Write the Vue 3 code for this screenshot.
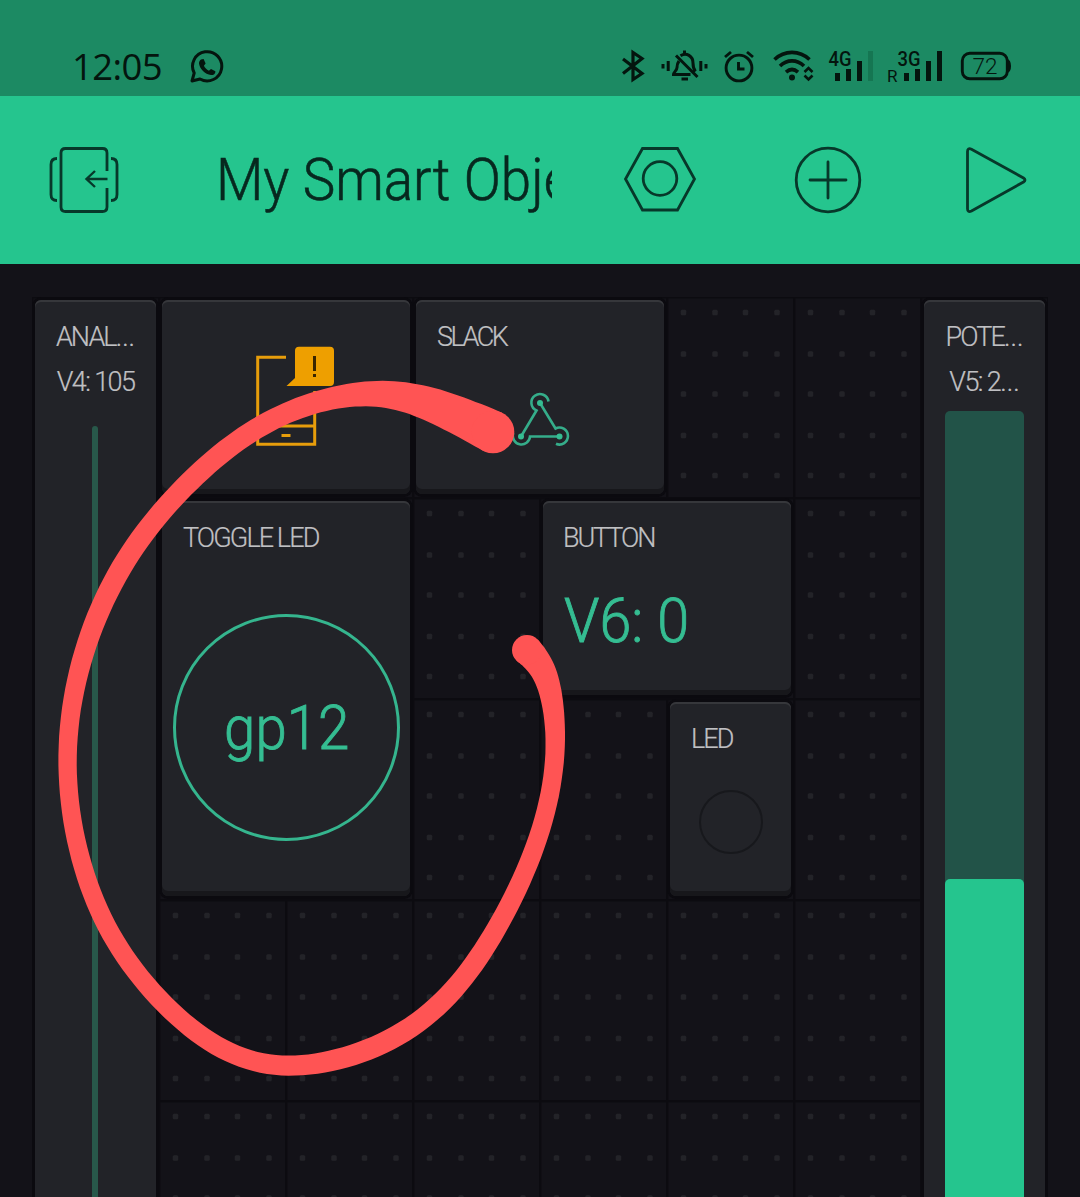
<script setup>
// Hand-drawn marker loop: centre x, centre y and half width along the stroke.
const loop = [
  [493, 432, 21.3], [450, 411.5, 18.5], [408, 397, 15], [366, 393, 12.3], [318, 401, 10.7], [268, 421, 10.4],
  [220, 453.5, 10.4], [172, 499, 10.3], [130, 552, 10.4], [96, 616, 10.3], [73.500, 690, 9.6], [66.300, 765, 9.1],
  [75, 840, 9.2], [98, 911, 9.4], [134, 971, 9.5], [184, 1024, 9.7], [236, 1057, 9.8], [288, 1067, 10],
  [345, 1058.5, 10.5], [405, 1033, 10.5], [455, 990, 10.2], [492, 937, 10], [525.500, 873, 9.5],
  [549.500, 802, 9.3], [556.300, 738, 9.6], [550.500, 690, 11.2], [540.500, 665, 13.2], [527, 650, 15]
]

const spline = (a, b, c, d, t) =>
  0.5 * (2 * b + (c - a) * t + (2 * a - 5 * b + 4 * c - d) * t * t + (3 * b - a - 3 * c + d) * t * t * t)
const at = (i) => loop[Math.max(0, Math.min(loop.length - 1, i))]
const samples = []
for (let i = 0; i < loop.length - 1; i++) {
  for (let s = 0; s < 8; s++) {
    samples.push([0, 1, 2].map((k) => spline(at(i - 1)[k], at(i)[k], at(i + 1)[k], at(i + 2)[k], s / 8)))
  }
}
samples.push(at(loop.length - 1))

// Average neighbouring samples so that the stroke bends evenly.
const smooth = samples.map((p, i) => {
  const r = Math.min(5, i, samples.length - 1 - i)
  const near = samples.slice(i - r, i + r + 1)
  return [0, 1, 2].map((k) => near.reduce((sum, q) => sum + q[k], 0) / near.length)
})

const edge = (side) =>
  smooth.map(([x, y, w], i) => {
    const p = smooth[Math.max(0, i - 1)]
    const n = smooth[Math.min(smooth.length - 1, i + 1)]
    const len = Math.hypot(n[0] - p[0], n[1] - p[1])
    return `${(x - (side * w * (n[1] - p[1])) / len).toFixed(1)} ${(y + (side * w * (n[0] - p[0])) / len).toFixed(1)}`
  })
const loopPath = `M${edge(1).join('L')}L${edge(-1).reverse().join('L')}Z`
const ends = [loop[0], loop[loop.length - 1]]

const dots = []
for (const y of [15.5, 57, 97, 138.5, 178.5]) {
  for (const x of [17.5, 49, 79.5, 111]) dots.push([x, y])
}
</script>

<template>
  <div class="screen">
    <div class="status">
      <span class="time">12:05</span>
      <svg class="whatsapp" width="36" height="36" viewBox="189 48 36 36" fill="none" stroke="#04150e">
        <path d="M192 81l2.200-8A14.600 14.600 0 1 1 200 79z" stroke-width="3" stroke-linejoin="round" />
        <path d="M201 59.500l2.600-.6 2 4.600-1.700 2.300c1 2.200 2.600 3.800 5 4.900l2.100-1.800 4.400 2.300c.2 2.600-2 4-4.400 3.900-6-.8-11.300-6-12-11.500 0-1.700.7-3.200 2-4.100z" fill="#04150e" stroke="none" />
      </svg>
      <div class="tray">
        <svg width="24" height="36" viewBox="621 48 24 36" fill="none" stroke="#04150e" stroke-width="3.200">
          <path d="M623 59l19 14.500-9 6V52.500l9 6L623 73.500" stroke-linejoin="miter" />
        </svg>
        <svg class="mute" width="46" height="36" viewBox="661 48 46 36" fill="none" stroke="#04150e" stroke-width="3">
          <path d="M663 64v4.500M668.200 61v10M700.800 61v10M706 64v4.500" />
          <path d="M676 55.500l21.500 21.500M679 61c-1.500 2-2 4-2 6.500 0 3-3.500 4.500-3.500 7h17M680.500 55.800c6-4 12.500.5 12.500 7.200 0 4 .3 6 2.500 8.500" />
          <path d="M684.500 50.500v3M681.500 79h6.500" />
        </svg>
        <svg class="alarm" width="30" height="36" viewBox="724 48 30 36" fill="none" stroke="#04150e" stroke-width="2.900">
          <circle cx="739" cy="68" r="12.900" />
          <path d="M738.500 62v7h6M725 57l6-5M753 57l-6-5" />
        </svg>
        <svg class="wifi" width="42" height="36" viewBox="773 48 42 36" fill="none" stroke="#04150e" stroke-width="3.600">
          <path d="M774.500 59.500c10-9.500 25-9.500 35 0M780 66c7-6.800 17-6.800 24 0M786 72.200c4-3.600 8-3.600 12 0" />
          <circle cx="792" cy="77.500" r="3" fill="#04150e" stroke="none" />
          <path d="M804.500 72l4-4 4 4M804.500 75.500l4 4 4-4" stroke-width="2.600" />
        </svg>
        <svg class="sim1" width="45" height="36" viewBox="829 48 45 36" fill="#04150e">
          <text x="828.500" y="65.700" font-size="20" font-weight="500" textLength="23" lengthAdjust="spacingAndGlyphs">4G</text>
          <path d="M835 73h5v8h-5zM846 69h5v12h-5zM857 61h5v20h-5z" />
          <path d="M868 51h5v30h-5z" fill="#157652" />
        </svg>
        <svg class="sim2" width="56" height="36" viewBox="887 48 56 36" fill="#04150e">
          <text x="887" y="81.500" font-size="17" font-weight="400" textLength="10.500" lengthAdjust="spacingAndGlyphs">R</text>
          <text x="897.500" y="65.700" font-size="20" font-weight="500" textLength="23" lengthAdjust="spacingAndGlyphs">3G</text>
          <path d="M904 73h5v8h-5zM915 69h5v12h-5zM926 61h5v20h-5zM937 51h5v30h-5z" />
        </svg>
        <svg class="battery" width="52" height="36" viewBox="960 48 52 36">
          <rect x="962.300" y="53.300" width="45" height="25.500" rx="7.500" fill="none" stroke="#04150e" stroke-width="2.900" />
          <path d="M1007 59q4 1 4 7t-4 7z" fill="#04150e" />
          <text x="972.500" y="73.700" font-size="22" font-weight="300" fill="#04150e" textLength="25" lengthAdjust="spacingAndGlyphs">72</text>
        </svg>
      </div>
    </div>

    <header class="bar">
      <svg width="72" height="68" viewBox="48 146 72 68" fill="none" stroke="#07382a" stroke-width="2.800">
        <path d="M107 171v-18q0-4.500-4.500-4.500h-37q-4.500 0-4.500 4.500v54q0 4.500 4.500 4.500h37q4.500 0 4.500-4.500v-19" />
        <path d="M57 158.500q-6 0-6 6v30q0 6 6 6M111 158.500q6 0 6 6v30q0 6-6 6" />
        <path d="M107.500 179H87M95 171l-8.500 8 8.500 8" stroke-width="2.400" />
      </svg>
      <h1 class="title"><span>My Smart Object</span></h1>
      <svg class="nut" width="74" height="68" viewBox="623 146 74 68" fill="none" stroke="#07382a" stroke-width="2.800">
        <path d="M642.500 148.500h35l17 30.500-17 31h-35l-17-31z" />
        <circle cx="660" cy="178.500" r="16.800" />
      </svg>
      <svg class="plus" width="68" height="68" viewBox="794 146 68 68" fill="none" stroke="#07382a" stroke-width="2.800" stroke-linecap="round">
        <circle cx="828" cy="180" r="31.800" />
        <path d="M810 180h36M828 162v36" />
      </svg>
      <svg class="play" width="64" height="68" viewBox="964 146 64 68" fill="none" stroke="#07382a" stroke-width="2.800">
        <path d="M967.500 151.500q0-4 4-2.300l52 28.800q3 2 0 4l-52 29q-4 1.800-4-2.200z" />
      </svg>
    </header>

    <main class="board">
      <svg class="dots" width="1016" height="1005">
        <defs>
          <pattern id="cell" x="-1" y="-1" width="127" height="201" patternUnits="userSpaceOnUse">
            <path d="M0 1.300h127M1.300 0v201" stroke="#0c0b10" stroke-width="2.600" />
            <rect v-for="([x, y], i) in dots" :key="i" :x="x - 2.700" :y="y - 1.800" width="5.400" height="5.600" rx="1.500" fill="#232328" />
          </pattern>
        </defs>
        <rect width="1016" height="1005" fill="url(#cell)" />
      </svg>

      <section class="card analog">
        <span class="name anal">ANAL<i>...</i></span>
        <span class="value">V4: 105</span>
        <div class="rail"></div>
      </section>

      <section class="card notify">
        <svg width="80" height="102" viewBox="255 346 80 102" fill="none" stroke="#e79d0b" stroke-width="3">
          <path d="M286 357.300h-28.300v87h57V391M258 426h57" />
          <path d="M281.500 435.500h9" />
          <path d="M299 346.800h31q4 0 4 4V382q0 4-4 4h-43.500l8.500-8V350.800q0-4 4-4z" fill="#ee9f00" stroke="none" />
          <path d="M314.500 356v15M314.500 374v3" stroke="#3a2500" />
        </svg>
      </section>

      <section class="card slack">
        <span class="name sl">SLACK</span>
        <svg class="hook" width="60" height="56" viewBox="511 391 60 56" fill="none" stroke="#35ad8a" stroke-width="2.600">
          <path d="M548.500 401.500a8.600 8.600 0 1 0-12 9L521 436.500" />
          <path d="M540 403l15.500 25.500a8.500 8.500 0 1 1 .5 15.300" />
          <path d="M513.300 433a8.600 8.600 0 1 0 16.700 3.500h29.500" />
          <g fill="#35bd92" stroke="none">
            <circle cx="540" cy="403" r="3" /><circle cx="521" cy="436.500" r="3" /><circle cx="559.500" cy="436.500" r="3" />
          </g>
        </svg>
      </section>

      <section class="card toggle">
        <span class="name tg">TOGGLE LED</span>
        <div class="ring"><span>gp12</span></div>
      </section>

      <section class="card button">
        <span class="name bt">BUTTON</span>
        <span class="big">V6: 0</span>
      </section>

      <section class="card led">
        <span class="name ld">LED</span>
        <div class="lamp"></div>
      </section>

      <section class="card pot">
        <span class="name pt">POTE<i>...</i></span>
        <span class="value v5">V5: 2<i>...</i></span>
        <div class="gauge"><div class="fill"></div></div>
      </section>
    </main>

    <svg class="marker" width="1080" height="1197" fill="#ff5454">
      <path :d="loopPath" />
      <circle v-for="([x, y, r], i) in ends" :key="i" :cx="x" :cy="y" :r="r" />
    </svg>
  </div>
</template>

<style>
body {
  background: #131218;
}
</style>

<style scoped>
.screen {
  position: relative;
  width: 1080px;
  height: 1197px;
  overflow: hidden;
  background: #131218;
  font-family: Roboto, "Open Sans", sans-serif;
  font-weight: 300;
}
svg {
  display: block;
  flex: none;
}
.status {
  display: flex;
  height: 96px;
  box-sizing: border-box;
  padding: 48px 68px 12px 72px;
  background: #1c8a63;
}
.time {
  width: 117px;
  font: 400 36.5px/36px "Open Sans", sans-serif;
  letter-spacing: -0.6px;
  color: #04150e;
  white-space: nowrap;
}
.tray {
  display: flex;
  margin-left: auto;
}
.tray svg {
  overflow: visible;
}
.mute {
  margin-left: 16px;
}
.alarm {
  margin-left: 17px;
}
.wifi {
  margin-left: 19px;
}
.sim1 {
  margin-left: 14px;
}
.sim2 {
  margin-left: 13px;
}
.battery {
  margin-left: 17px;
}
.bar {
  display: flex;
  align-items: flex-start;
  height: 168px;
  box-sizing: border-box;
  padding: 50px 0 0 48px;
  background: #25c58e;
}
.title {
  width: 336px;
  margin: 0 0 0 96px;
  overflow: hidden;
  white-space: nowrap;
  font-size: 59.5px;
  line-height: 68px;
  font-weight: 300;
  color: #07281f;
}
.title span {
  display: inline-block;
  transform: scaleX(0.92);
  transform-origin: 0 50%;
  -webkit-text-stroke: 0.6px;
}
.nut {
  margin-left: 71px;
}
.plus {
  margin-left: 97px;
}
.play {
  margin-left: 102px;
}
.board {
  display: grid;
  grid-template-columns: repeat(8, 127px);
  grid-template-rows: repeat(5, 201px);
  padding: 33px 32px 0;
}
.dots {
  grid-area: 1 / 1 / -1 / -1;
}
.card {
  display: flex;
  flex-direction: column;
  align-items: flex-start;
  box-sizing: border-box;
  margin: 3px 3px 4px;
  padding: 20px 21px 0;
  border-radius: 6px;
  background: #222328;
  box-shadow: 0 0 0 3px #0b0a0f, inset 0 2px #36373b, inset 0 -5px #17171b;
}
.analog {
  grid-area: 1 / 1 / 6 / 2;
  align-items: center;
  padding: 20px 0 0;
}
.notify {
  grid-area: 1 / 2 / 2 / 4;
  align-items: center;
  padding-top: 46px;
  padding-left: 38px;
  padding-right: 20px;
}
.slack {
  grid-area: 1 / 4 / 2 / 6;
}
.toggle {
  grid-area: 2 / 2 / 4 / 4;
}
.button {
  grid-area: 2 / 5 / 3 / 7;
}
.led {
  grid-area: 3 / 6 / 4 / 7;
}
.pot {
  grid-area: 1 / 8 / 6 / 9;
  align-items: center;
  padding: 20px 0 0;
}
.name,
.value {
  font-size: 27px;
  line-height: 34px;
  letter-spacing: -1.9px;
  white-space: nowrap;
  color: #c0c0c3;
  -webkit-text-stroke: 0.2px;
}
.sl {
  letter-spacing: -2.5px;
}
.bt {
  letter-spacing: -2.1px;
  margin-left: -1px;
}
.value {
  margin-top: 11px;
  letter-spacing: -1.6px;
}
i {
  font-style: normal;
  letter-spacing: 0;
}
.rail {
  width: 6px;
  flex: 1;
  margin: 27px 2px 0 0;
  border-radius: 3px 3px 0 0;
  background: #28584a;
}
.hook {
  margin: 37px 0 0 74px;
}
.ring {
  display: flex;
  align-items: center;
  justify-content: center;
  box-sizing: border-box;
  width: 227px;
  height: 227px;
  margin: 59px 0 0 -10px;
  border: 3px solid #35b58e;
  border-radius: 50%;
  font-size: 61px;
  line-height: 70px;
  color: #35bd92;
}
.ring span {
  display: inline-block;
  transform: scaleX(0.925);
  -webkit-text-stroke: 0.9px;
}
.big {
  margin-top: 31px;
  font-size: 61px;
  line-height: 70px;
  color: #35bd92;
  white-space: nowrap;
  transform: scaleX(0.94);
  transform-origin: 0 50%;
  -webkit-text-stroke: 0.9px;
}
.lamp {
  box-sizing: border-box;
  width: 64px;
  height: 64px;
  margin: 34px 0 0 8px;
  border: 2px solid #17181c;
  border-radius: 50%;
}
.gauge {
  display: flex;
  flex: 1;
  width: 79px;
  margin-top: 12px;
  padding-top: 468px;
  box-sizing: border-box;
  border-radius: 5px 5px 0 0;
  background: #225348;
}
.fill {
  flex: 1;
  border-radius: 5px 5px 0 0;
  background: #25c58e;
}
.marker {
  position: absolute;
  inset: 0;
}
</style>
